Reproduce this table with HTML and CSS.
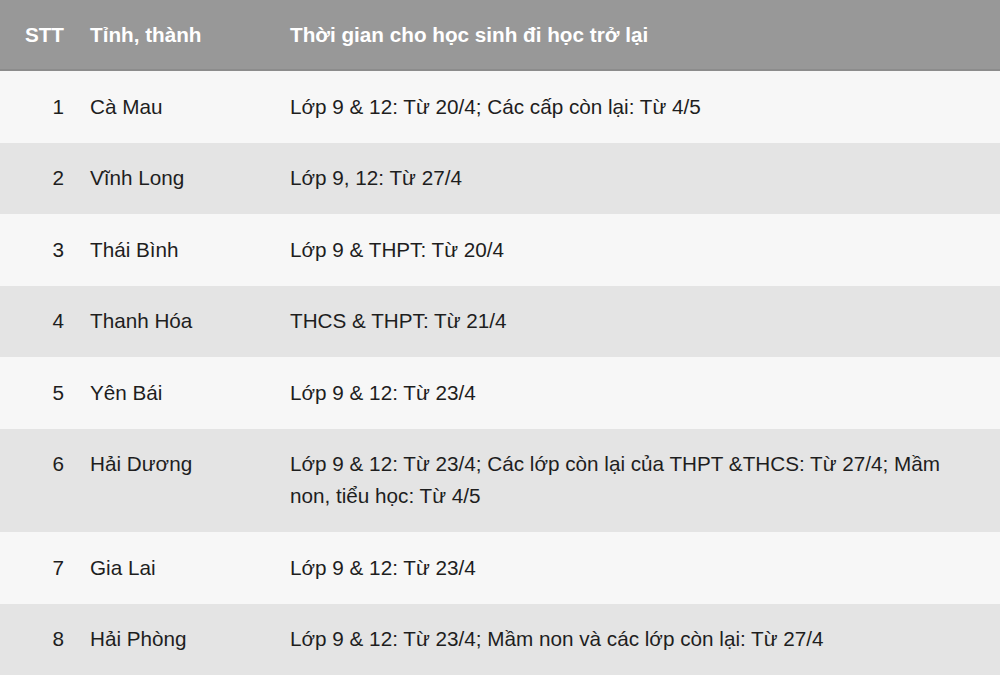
FILE: index.html
```html
<!DOCTYPE html>
<html lang="vi">
<head>
<meta charset="utf-8">
<link rel="stylesheet" href="styles.css">
</head>
<body>
<table class="schedule">
  <colgroup>
    <col class="c-stt">
    <col class="c-prov">
    <col class="c-time">
  </colgroup>
  <thead>
    <tr>
      <th class="stt">STT</th>
      <th>Tỉnh, thành</th>
      <th>Thời gian cho học sinh đi học trở lại</th>
    </tr>
  </thead>
  <tbody>
    <tr><td class="stt">1</td><td>Cà Mau</td><td>Lớp 9 &amp; 12: Từ 20/4; Các cấp còn lại: Từ 4/5</td></tr>
    <tr><td class="stt">2</td><td>Vĩnh Long</td><td>Lớp 9, 12: Từ 27/4</td></tr>
    <tr><td class="stt">3</td><td>Thái Bình</td><td>Lớp 9 &amp; THPT: Từ 20/4</td></tr>
    <tr><td class="stt">4</td><td>Thanh Hóa</td><td>THCS &amp; THPT: Từ 21/4</td></tr>
    <tr><td class="stt">5</td><td>Yên Bái</td><td>Lớp 9 &amp; 12: Từ 23/4</td></tr>
    <tr><td class="stt">6</td><td>Hải Dương</td><td>Lớp 9 &amp; 12: Từ 23/4; Các lớp còn lại của THPT &amp;THCS: Từ 27/4; Mầm non, tiểu học: Từ 4/5</td></tr>
    <tr><td class="stt">7</td><td>Gia Lai</td><td>Lớp 9 &amp; 12: Từ 23/4</td></tr>
    <tr><td class="stt">8</td><td>Hải Phòng</td><td>Lớp 9 &amp; 12: Từ 23/4; Mầm non và các lớp còn lại: Từ 27/4</td></tr>
  </tbody>
</table>
</body>
</html>
```
FILE: styles.css
```css
html, body {
  margin: 0;
  padding: 0;
  background: #ffffff;
}
body {
  font-family: "Liberation Sans", Arial, sans-serif;
  font-size: 20.7px;
  color: #1e1e1e;
}
.schedule {
  width: 1000px;
  border-collapse: collapse;
  table-layout: fixed;
}
.c-stt { width: 78px; }
.c-prov { width: 200px; }
.c-time { width: auto; }

.schedule th {
  background: #989898;
  color: #ffffff;
  font-weight: bold;
  text-align: left;
  height: 70px;
  padding: 0 12px;
  box-sizing: border-box;
  line-height: 32px;
  border-bottom: 2px solid #8c8c8c;
}
.schedule td {
  padding: 19.75px 30px 19.75px 12px;
  line-height: 32px;
  vertical-align: top;
}
.schedule td.stt,
.schedule th.stt {
  text-align: right;
  padding-right: 14px;
  padding-left: 0;
}
.schedule tbody tr:nth-child(odd) { background: #f7f7f7; }
.schedule tbody tr:nth-child(even) { background: #e4e4e4; }
```
